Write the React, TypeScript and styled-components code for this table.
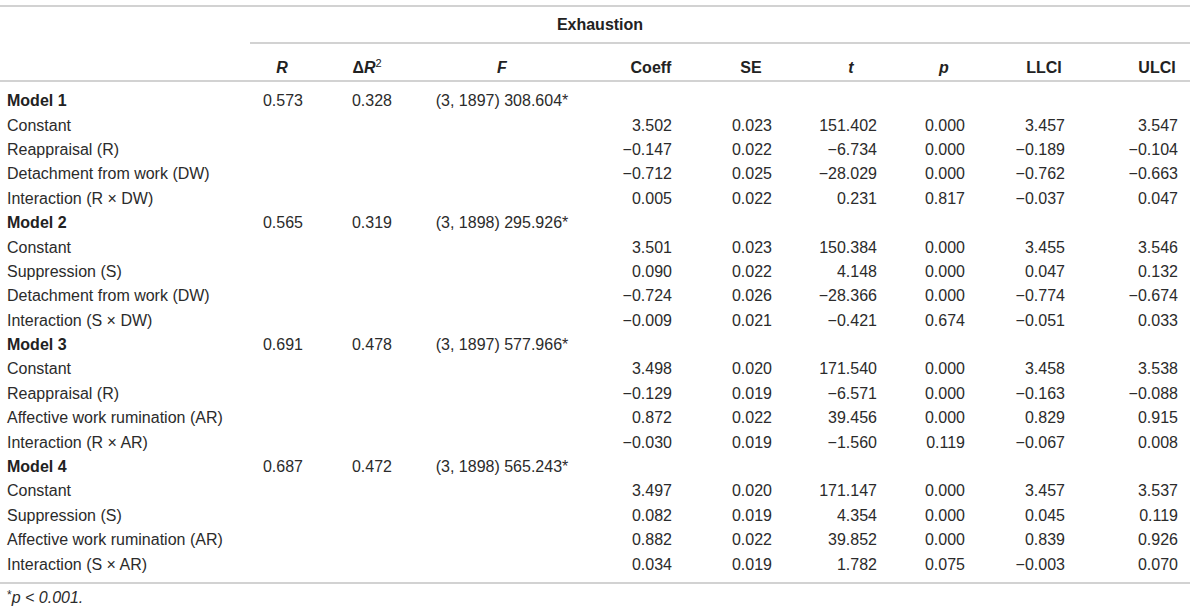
import React from "react";
import styled, { createGlobalStyle } from "styled-components";

const Global = createGlobalStyle`
  html, body { margin: 0; padding: 0; background: #fff; }
  body { font-family: "Liberation Sans", Arial, Helvetica, sans-serif; color: #2b2b2b; }
`;

const COLS = "250px 53px 89px 220px 60px 100px 105px 88px 100px 113px";

const Table = styled.div`
  width: 1190px;
  padding-top: 5px;
  font-size: 16px;
`;

const TopRule = styled.div`
  border-top: 2px solid #d2d2d2;
`;

const GroupRow = styled.div`
  display: grid;
  grid-template-columns: 250px 940px;
  height: 37px;
`;

const GroupCell = styled.div`
  border-bottom: 2px solid #d2d2d2;
  display: flex;
  align-items: center;
  justify-content: center;
  padding-right: 240px;
  font-weight: bold;
  color: #222;
`;

const HeadRow = styled.div`
  display: grid;
  grid-template-columns: ${COLS};
  padding-right: 12px;
  border-bottom: 2px solid #d2d2d2;
  align-items: center;
  padding-top: 12px;
  box-sizing: border-box;
  height: 38px;
`;

const HeadCell = styled.div<{ $shift?: number }>`
  display: flex;
  justify-content: flex-end;
  font-weight: bold;
  color: #222;
  & > span {
    display: inline-block;
    width: 42px;
    text-align: center;
    margin-right: ${(p) => p.$shift ?? 0}px;
    white-space: nowrap;
  }
`;

const HeadCenter = styled.div`
  text-align: center;
  font-weight: bold;
  color: #222;
`;

const It = styled.i`
  font-style: italic;
`;

const Sup = styled.sup`
  font-size: 11px;
  line-height: 0;
  vertical-align: 6px;
  font-weight: normal;
`;

const Body = styled.div`
  padding: 7px 0 5px;
  border-bottom: 2px solid #d2d2d2;
`;

const Row = styled.div`
  display: grid;
  grid-template-columns: ${COLS};
  padding-right: 12px;
  height: 24.4px;
  align-items: center;
  white-space: nowrap;
`;

const Label = styled.div<{ $bold?: boolean }>`
  padding-left: 7px;
  font-weight: ${(p) => (p.$bold ? "bold" : "normal")};
  color: ${(p) => (p.$bold ? "#222" : "#2b2b2b")};
`;

const Num = styled.div`
  text-align: right;
`;

const Center = styled.div`
  text-align: center;
`;

const Foot = styled.div`
  padding: 3px 0 0 7px;
  font-size: 16px;
  line-height: 22px;
  font-style: italic;
`;

const FootStar = styled.span`
  font-style: normal;
  font-size: 12px;
  vertical-align: 4px;
  line-height: 0;
`;

type ModelRow = {
  label: string;
  bold?: boolean;
  r?: string;
  dr?: string;
  f?: string;
  v?: string[];
};

const M = "\u2212";
const X = "\u00d7";

const rows: ModelRow[] = [
  { label: "Model 1", bold: true, r: "0.573", dr: "0.328", f: "(3, 1897) 308.604*" },
  { label: "Constant", v: ["3.502", "0.023", "151.402", "0.000", "3.457", "3.547"] },
  { label: "Reappraisal (R)", v: [`${M}0.147`, "0.022", `${M}6.734`, "0.000", `${M}0.189`, `${M}0.104`] },
  { label: "Detachment from work (DW)", v: [`${M}0.712`, "0.025", `${M}28.029`, "0.000", `${M}0.762`, `${M}0.663`] },
  { label: `Interaction (R ${X} DW)`, v: ["0.005", "0.022", "0.231", "0.817", `${M}0.037`, "0.047"] },
  { label: "Model 2", bold: true, r: "0.565", dr: "0.319", f: "(3, 1898) 295.926*" },
  { label: "Constant", v: ["3.501", "0.023", "150.384", "0.000", "3.455", "3.546"] },
  { label: "Suppression (S)", v: ["0.090", "0.022", "4.148", "0.000", "0.047", "0.132"] },
  { label: "Detachment from work (DW)", v: [`${M}0.724`, "0.026", `${M}28.366`, "0.000", `${M}0.774`, `${M}0.674`] },
  { label: `Interaction (S ${X} DW)`, v: [`${M}0.009`, "0.021", `${M}0.421`, "0.674", `${M}0.051`, "0.033"] },
  { label: "Model 3", bold: true, r: "0.691", dr: "0.478", f: "(3, 1897) 577.966*" },
  { label: "Constant", v: ["3.498", "0.020", "171.540", "0.000", "3.458", "3.538"] },
  { label: "Reappraisal (R)", v: [`${M}0.129`, "0.019", `${M}6.571`, "0.000", `${M}0.163`, `${M}0.088`] },
  { label: "Affective work rumination (AR)", v: ["0.872", "0.022", "39.456", "0.000", "0.829", "0.915"] },
  { label: `Interaction (R ${X} AR)`, v: [`${M}0.030`, "0.019", `${M}1.560`, "0.119", `${M}0.067`, "0.008"] },
  { label: "Model 4", bold: true, r: "0.687", dr: "0.472", f: "(3, 1898) 565.243*" },
  { label: "Constant", v: ["3.497", "0.020", "171.147", "0.000", "3.457", "3.537"] },
  { label: "Suppression (S)", v: ["0.082", "0.019", "4.354", "0.000", "0.045", "0.119"] },
  { label: "Affective work rumination (AR)", v: ["0.882", "0.022", "39.852", "0.000", "0.839", "0.926"] },
  { label: `Interaction (S ${X} AR)`, v: ["0.034", "0.019", "1.782", "0.075", `${M}0.003`, "0.070"] },
];

export default function App() {
  return (
    <>
      <Global />
      <Table>
        <TopRule />
        <GroupRow>
          <div />
          <GroupCell>Exhaustion</GroupCell>
        </GroupRow>
        <HeadRow>
          <div />
          <HeadCell>
            <span><It>R</It></span>
          </HeadCell>
          <HeadCell $shift={4}>
            <span>
              Δ<It>R</It>
              <Sup>2</Sup>
            </span>
          </HeadCell>
          <HeadCenter>
            <It>F</It>
          </HeadCenter>
          <HeadCell>
            <span>Coeff</span>
          </HeadCell>
          <HeadCell>
            <span>SE</span>
          </HeadCell>
          <HeadCell $shift={5}>
            <span><It>t</It></span>
          </HeadCell>
          <HeadCell>
            <span><It>p</It></span>
          </HeadCell>
          <HeadCell>
            <span>LLCI</span>
          </HeadCell>
          <HeadCell>
            <span>ULCI</span>
          </HeadCell>
        </HeadRow>
        <Body>
          {rows.map((r, i) => (
            <Row key={i}>
              <Label $bold={r.bold}>{r.label}</Label>
              <Num>{r.r ?? ""}</Num>
              <Num>{r.dr ?? ""}</Num>
              <Center>{r.f ?? ""}</Center>
              {(r.v ?? ["", "", "", "", "", ""]).map((v, j) => (
                <Num key={j}>{v}</Num>
              ))}
            </Row>
          ))}
        </Body>
        <Foot>
          <FootStar>*</FootStar>p &lt; 0.001.
        </Foot>
      </Table>
    </>
  );
}
